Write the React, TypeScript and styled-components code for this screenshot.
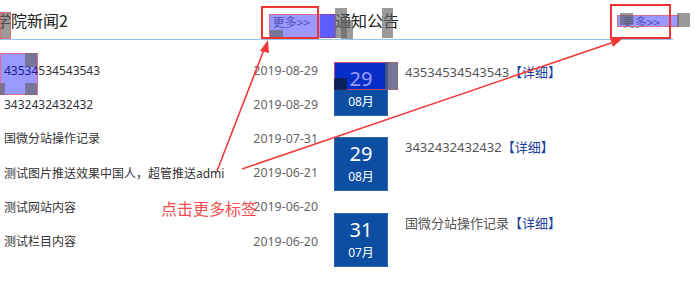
import React from "react";
import styled, { createGlobalStyle } from "styled-components";

const Global = createGlobalStyle`
  html, body { margin: 0; padding: 0; background: #fff; }
  body { font-family: "Noto Sans", "Noto Sans CJK SC", sans-serif; color: #333; }
`;

const Page = styled.div`
  position: relative;
  width: 698px;
  height: 288px;
  overflow: hidden;
  display: flex;
  align-items: flex-start;
`;

const Panel = styled.section<{ $w: number; $ml: number }>`
  width: ${(p) => p.$w}px;
  margin-left: ${(p) => p.$ml}px;
  display: flex;
  flex-direction: column;
`;

const Header = styled.div`
  height: 39px;
  border-bottom: 1px solid #94c3ec;
  display: flex;
  align-items: center;
  justify-content: space-between;
`;

const Title = styled.h2<{ $ml: number }>`
  margin: 0 0 0 ${(p) => p.$ml}px;
  font-size: 16px;
  font-weight: normal;
  color: #222;
  line-height: 22px;
  white-space: nowrap;
  font-family: "Noto Sans CJK SC", sans-serif;
`;

const More = styled.a<{ $mr: number }>`
  margin-right: ${(p) => p.$mr}px;
  margin-top: 3px;
  font-size: 12px;
  color: #888;
  text-decoration: none;
  font-family: "Noto Sans CJK SC", sans-serif;
`;

const NewsList = styled.ul`
  list-style: none;
  margin: 0;
  padding: 13px 15px 0 4px;
`;

const NewsRow = styled.li`
  height: 34.2px;
  display: flex;
  align-items: center;
  justify-content: space-between;
  font-size: 12px;
`;

const NewsTitle = styled.span`
  white-space: nowrap;
  color: #333;
  font-family: "Noto Sans", "Noto Sans CJK SC", sans-serif;
`;

const NewsDate = styled.span`
  color: #666;
  font-size: 12.4px;
  font-family: "Noto Sans", sans-serif;
`;

const NoticeList = styled.ul`
  list-style: none;
  margin: 0;
  padding: 22px 0 0 0;
  display: flex;
  flex-direction: column;
  gap: 21.3px;
`;

const NoticeRow = styled.li`
  display: flex;
  align-items: flex-start;
  gap: 17px;
`;

const DateBox = styled.div`
  width: 54px;
  height: 54px;
  background: #0b4ea2;
  color: #fff;
  display: flex;
  flex-direction: column;
  align-items: center;
  box-sizing: border-box;
  border: 1px solid #2d66b0;
`;

const Day = styled.div`
  font-size: 20px;
  line-height: 26px;
  margin-top: 3px;
  font-family: "Noto Sans", sans-serif;
`;

const Month = styled.div`
  font-size: 12px;
  line-height: 16px;
  margin-top: 2px;
  font-family: "Noto Sans", "Noto Sans CJK SC", sans-serif;
`;

const NoticeText = styled.div`
  font-size: 13px;
  line-height: 20px;
  color: #555;
  font-family: "Noto Sans", "Noto Sans CJK SC", sans-serif;
`;

const Detail = styled.a`
  color: #1d3f9c;
  text-decoration: none;
  font-family: "Noto Sans CJK SC", sans-serif;
`;

/* devtools highlight artifacts lying over the page */
const Mark = styled.div<{ $kind: "purple" | "grey" | "dark"; $red?: boolean }>`
  position: absolute;
  pointer-events: none;
  box-sizing: border-box;
  background: ${(p) =>
    p.$kind === "purple"
      ? "rgba(0,0,255,0.4)"
      : p.$kind === "grey"
      ? "rgba(100,100,100,0.65)"
      : "rgba(10,30,70,0.85)"};
  border: ${(p) => (p.$red ? "1px solid rgba(255,90,90,0.7)" : "none")};
`;

const Annot = styled.svg`
  position: absolute;
  left: 0;
  top: 0;
  pointer-events: none;
`;

const AnnotLabel = styled.div`
  position: absolute;
  left: 161px;
  top: 197px;
  font-size: 16px;
  line-height: 22px;
  color: #f54d4d;
  font-family: "Noto Sans CJK SC", sans-serif;
  white-space: nowrap;
`;

const news = [
  ["43534534543543", "2019-08-29"],
  ["3432432432432", "2019-08-29"],
  ["国微分站操作记录", "2019-07-31"],
  ["测试图片推送效果中国人，超管推送admi", "2019-06-21"],
  ["测试网站内容", "2019-06-20"],
  ["测试栏目内容", "2019-06-20"],
];

const notices = [
  { day: "29", month: "08月", title: "43534534543543" },
  { day: "29", month: "08月", title: "3432432432432" },
  { day: "31", month: "07月", title: "国微分站操作记录" },
];

const marks: { l: number; t: number; w: number; h: number; k: "purple" | "grey" | "dark"; red?: boolean }[] = [
  { l: 0, t: 12, w: 11, h: 27, k: "grey", red: true },
  { l: 269, t: 14, w: 67, h: 24, k: "purple", red: true },
  { l: 270, t: 30, w: 13, h: 8, k: "grey" },
  { l: 320, t: 14, w: 15, h: 24, k: "purple" },
  { l: 335, t: 8, w: 12, h: 30, k: "grey" },
  { l: 341, t: 20, w: 12, h: 19, k: "grey" },
  { l: 382, t: 8, w: 11, h: 30, k: "grey" },
  { l: 617, t: 15, w: 62, h: 12, k: "purple", red: true },
  { l: 620, t: 13, w: 13, h: 12, k: "grey" },
  { l: 677, t: 13, w: 13, h: 14, k: "grey" },
  { l: 0, t: 53, w: 38, h: 42, k: "purple", red: true },
  { l: 25, t: 53, w: 12, h: 14, k: "grey" },
  { l: 0, t: 83, w: 5, h: 12, k: "grey" },
  { l: 25, t: 83, w: 12, h: 12, k: "grey" },
  { l: 334, t: 62, w: 64, h: 28, k: "purple", red: true },
  { l: 385, t: 62, w: 13, h: 28, k: "grey" },
  { l: 334, t: 78, w: 13, h: 12, k: "dark" },
];

export default function App() {
  return (
    <>
      <Global />
      <Page>
        <Panel $w={333} $ml={0}>
          <Header>
            <Title $ml={-5}>学院新闻2</Title>
            <More href="#" $mr={23}>更多&gt;&gt;</More>
          </Header>
          <NewsList>
            {news.map(([t, d], i) => (
              <NewsRow key={i}>
                <NewsTitle>{t}</NewsTitle>
                <NewsDate>{d}</NewsDate>
              </NewsRow>
            ))}
          </NewsList>
        </Panel>
        <Panel $w={339} $ml={1}>
          <Header>
            <Title $ml={1}>通知公告</Title>
            <More href="#" $mr={13}>更多&gt;&gt;</More>
          </Header>
          <NoticeList>
            {notices.map((n, i) => (
              <NoticeRow key={i}>
                <DateBox>
                  <Day>{n.day}</Day>
                  <Month>{n.month}</Month>
                </DateBox>
                <NoticeText>
                  {n.title}
                  <Detail href="#">【详细】</Detail>
                </NoticeText>
              </NoticeRow>
            ))}
          </NoticeList>
        </Panel>

        {marks.map((m, i) => (
          <Mark key={i} $kind={m.k} $red={m.red} style={{ left: m.l, top: m.t, width: m.w, height: m.h }} />
        ))}

        <Annot width={698} height={288} viewBox="0 0 698 288">
          <rect x={262} y={7} width={56} height={31} fill="none" stroke="#ee3333" strokeWidth={2} />
          <rect x={611} y={5} width={59} height={33} fill="none" stroke="#ee3333" strokeWidth={2} />
          <line x1={217} y1={171} x2={265} y2={47} stroke="#f03a3a" strokeWidth={1.6} />
          <polygon points="268,40 260,51 269,53" fill="#f03a3a" />
          <line x1={242} y1={169} x2={614} y2={42} stroke="#f03a3a" strokeWidth={1.6} />
          <polygon points="622,39 610,38 613,47" fill="#f03a3a" />
        </Annot>
        <AnnotLabel>点击更多标签</AnnotLabel>
      </Page>
    </>
  );
}
